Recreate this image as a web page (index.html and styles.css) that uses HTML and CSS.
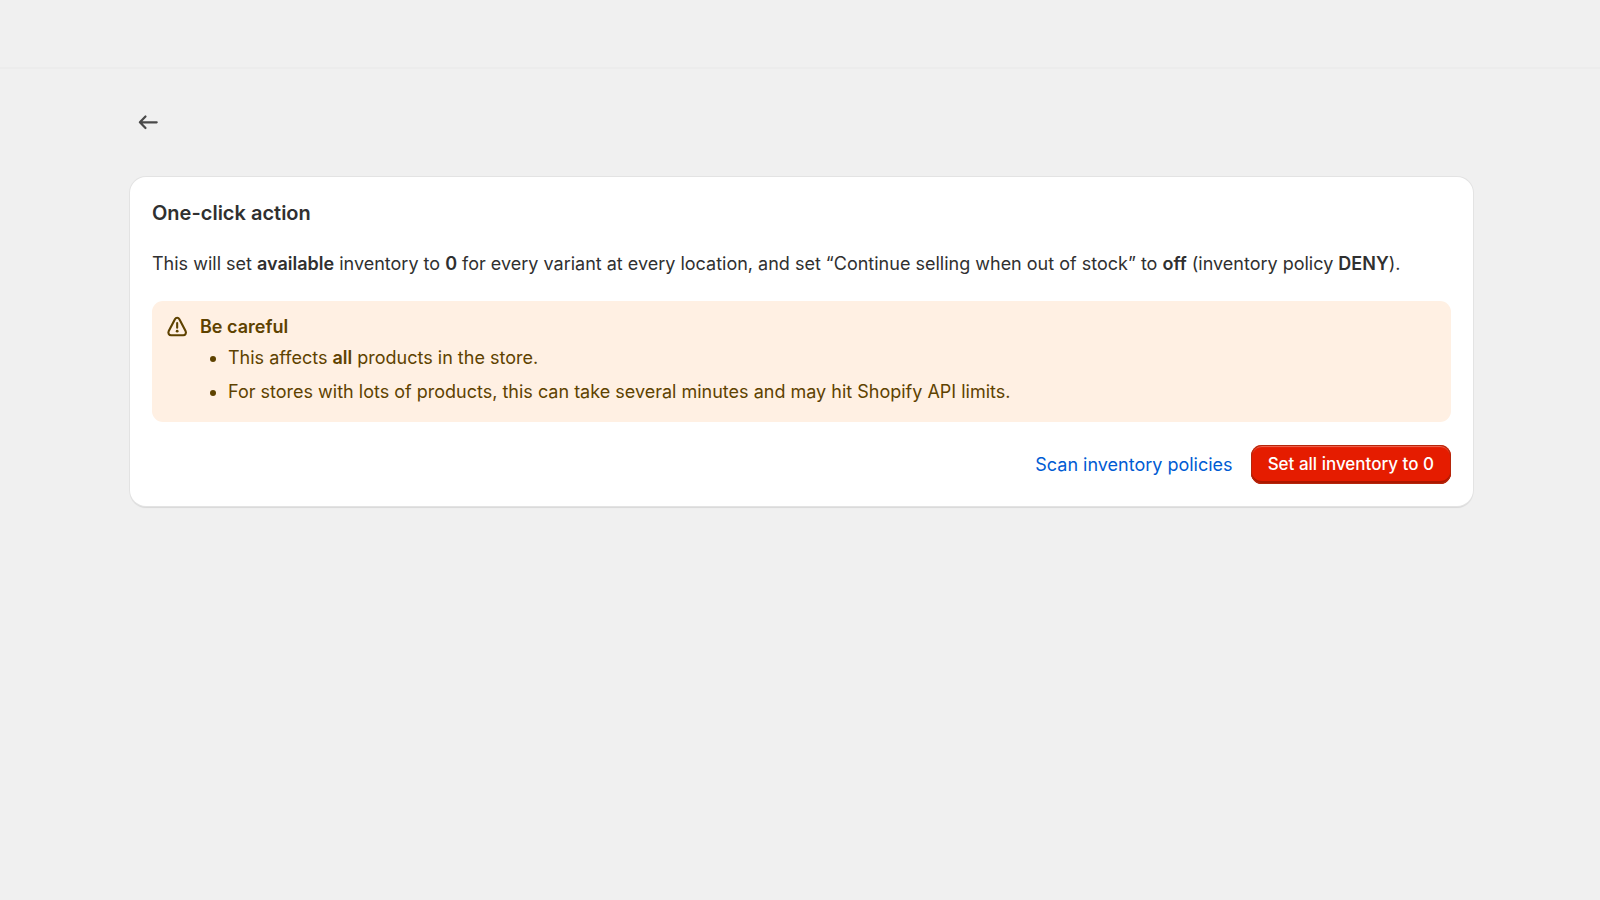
FILE: index.html
```
<!DOCTYPE html>
<html lang="en">
<head>
    <meta charset="UTF-8">
    <meta name="viewport" content="width=device-width, initial-scale=1.0">
    <title>One-click action</title>
    <link rel="stylesheet" href="styles.css">
</head>
<body>
    <header class="title-bar"></header>

    <main class="page">
        <a class="back-link" href="#" aria-label="Back">
            <svg viewBox="0 0 20 20" aria-hidden="true">
                <path d="M16.2 10.2H4.6M8.2 6.1L4.2 10.2L8.2 14.3" />
            </svg>
        </a>

        <section class="card">
            <h2>One-click action</h2>
            <p>This will set <strong>available</strong> inventory to <strong>0</strong> for every variant at every location, and set “Continue selling when out of stock” to <strong>off</strong> (inventory policy <strong>DENY</strong>).</p>

            <div class="banner" role="status">
                <svg class="banner-icon" viewBox="0 0 20 20" aria-hidden="true">
                    <path d="M7.8 4.4C8.5 3.1 10.3 3.1 11 4.4L15.4 12.9C16.1 14.3 15.3 15.9 13.7 15.9H5.1C3.5 15.9 2.7 14.3 3.4 12.9Z" />
                    <path d="M9.4 7.2V10.5" />
                    <circle cx="9.4" cy="13" r="1" />
                </svg>
                <div class="banner-content">
                    <h3>Be careful</h3>
                    <ul>
                        <li>This affects <strong>all</strong> products in the store.</li>
                        <li>For stores with lots of products, this can take several minutes and may hit Shopify API limits.</li>
                    </ul>
                </div>
            </div>

            <div class="actions">
                <a class="scan-link" href="#">Scan inventory policies</a>
                <button class="danger-button" type="button">Set all inventory to 0</button>
            </div>
        </section>
    </main>
</body>
</html>
```
FILE: styles.css
```
:root {
    --background-color: #f0f0f0;
    --text-color: #303030;
    --caution-bg: #fff0e3;
    --caution-text: #5e4200;
    --link-color: #005bd3;
    --danger-color: #e51c00;
}

* {
    box-sizing: border-box;
}

body {
    margin: 0;
    font-family: Inter, sans-serif;
    font-size: 18px;
    line-height: 28px;
    background: var(--background-color);
    color: var(--text-color);
}

h2,
h3,
p,
ul {
    margin: 0;
}

h2 {
    font-size: 20px;
    font-weight: 600;
}

h3 {
    font-size: 18px;
    font-weight: 600;
}

strong {
    font-weight: 600;
}

.title-bar {
    height: 69px;
    border-bottom: 2px solid #ececec;
}

.page {
    padding: 35px 127px 36px 130px;
}

.back-link {
    display: flex;
    align-items: center;
    justify-content: center;
    width: 36px;
    height: 36px;
    margin-bottom: 37px;
    border-radius: 8px;
}

.back-link svg {
    width: 28px;
    height: 28px;
    fill: none;
    stroke: #4a4a4a;
    stroke-width: 1.6;
    stroke-linecap: round;
    stroke-linejoin: round;
}

.card {
    display: flex;
    flex-direction: column;
    gap: 23px;
    padding: 22px;
    background: #ffffff;
    border-radius: 16px;
    box-shadow: 0 0 0 1px #e3e3e3, 0 2px 1px rgba(0, 0, 0, 0.1);
}

/* Caution banner */
.banner {
    display: flex;
    gap: 8px;
    padding: 12px;
    background: var(--caution-bg);
    color: var(--caution-text);
    border-radius: 11px;
}

.banner-icon {
    flex: none;
    width: 28px;
    height: 28px;
    fill: none;
    stroke: currentColor;
    stroke-width: 1.5;
    stroke-linecap: round;
}

.banner-icon circle {
    fill: currentColor;
    stroke: none;
}

.banner ul {
    padding-left: 28px;
}

.banner li {
    margin-top: 3px;
}

.banner li + li {
    margin: 6px 0 4px;
}

/* Actions */
.actions {
    display: flex;
    align-items: center;
    justify-content: flex-end;
    gap: 18px;
}

.scan-link {
    color: var(--link-color);
    text-decoration: none;
}

.danger-button {
    padding: 6px 17px;
    border: 0;
    border-radius: 11px;
    background: var(--danger-color);
    box-shadow: inset 0 0 0 1px #b5260b, inset 0 2px 1px #f06a55, inset 0 -3px 0 #ad1700;
    color: #ffffff;
    font-family: inherit;
    font-size: 17px;
    font-weight: 500;
    line-height: 27px;
    cursor: pointer;
}
```
